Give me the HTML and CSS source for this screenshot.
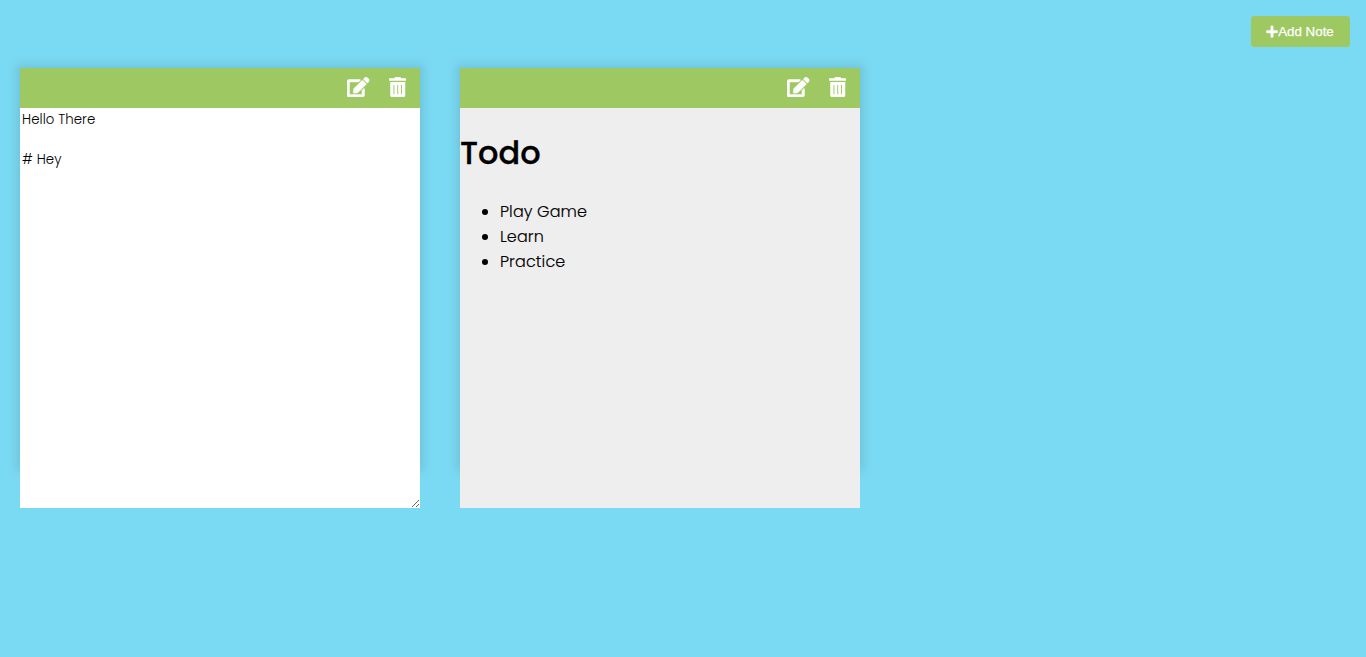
FILE: index.html
```html
<!DOCTYPE html>
<html lang="en">
<head>
<meta charset="utf-8">
<title>Notes</title>
<link rel="stylesheet" href="styles.css">
</head>
<body>
<svg class="sprite" aria-hidden="true">
  <symbol id="edit" viewBox="0 0 576 512"><path d="M402.6 83.2l90.2 90.2c3.8 3.8 3.8 10 0 13.8L274.4 405.6l-92.8 10.3c-12.4 1.4-22.9-9.1-21.5-21.5l10.3-92.8L388.8 83.2c3.8-3.8 10-3.8 13.8 0zm162-22.9l-48.8-48.8c-15.2-15.2-39.9-15.2-55.2 0l-35.4 35.4c-3.8 3.8-3.8 10 0 13.8l90.2 90.2c3.8 3.8 10 3.8 13.8 0l35.4-35.4c15.2-15.3 15.2-40 0-55.2zM384 346.2V448H64V128h229.8c3.2 0 6.2-1.3 8.5-3.5l40-40c7.6-7.6 2.2-20.5-8.5-20.5H48C21.5 64 0 85.5 0 112v352c0 26.5 21.5 48 48 48h352c26.5 0 48-21.5 48-48V306.2c0-10.7-12.9-16-20.5-8.5l-40 40c-2.2 2.3-3.5 5.3-3.5 8.5z"/></symbol>
  <symbol id="trash" viewBox="0 0 448 512"><path d="M32 464a48 48 0 0 0 48 48h288a48 48 0 0 0 48-48V128H32zm277-256a11 11 0 0 1 24 0v224a11 11 0 0 1-24 0zm-97 0a11 11 0 0 1 24 0v224a11 11 0 0 1-24 0zm-97 0a11 11 0 0 1 24 0v224a11 11 0 0 1-24 0zM432 32H312l-9.4-18.7A24 24 0 0 0 281.1 0H166.8a23.7 23.7 0 0 0-21.4 13.3L136 32H16A16 16 0 0 0 0 48v32a16 16 0 0 0 16 16h416a16 16 0 0 0 16-16V48a16 16 0 0 0-16-16z"/></symbol>
  <symbol id="plus" viewBox="0 0 448 512"><path d="M416 208H272V64c0-17.7-14.3-32-32-32h-32c-17.7 0-32 14.3-32 32v144H32c-17.7 0-32 14.3-32 32v32c0 17.7 14.3 32 32 32h144v144c0 17.7 14.3 32 32 32h32c17.7 0 32-14.3 32-32V304h144c17.7 0 32-14.3 32-32v-32c0-17.7-14.3-32-32-32z"/></symbol>
</svg>
<header class="toolbar">
  <button class="add"><svg class="plus"><use href="#plus"/></svg><span class="add-label">Add Note</span></button>
</header>
<main class="notes">
  <section class="note">
    <div class="tools">
      <button class="edit"><svg><use href="#edit"/></svg></button>
      <button class="delete"><svg><use href="#trash"/></svg></button>
    </div>
    <textarea class="editor" spellcheck="false">Hello There

# Hey</textarea>
  </section>
  <section class="note">
    <div class="tools">
      <button class="edit"><svg><use href="#edit"/></svg></button>
      <button class="delete"><svg><use href="#trash"/></svg></button>
    </div>
    <div class="preview">
      <h1>Todo</h1>
      <ul>
        <li>Play Game</li>
        <li>Learn</li>
        <li>Practice</li>
      </ul>
    </div>
  </section>
</main>
</body>
</html>
```
FILE: styles.css
```css
* { box-sizing: border-box; }
body {
  margin: 0;
  min-height: 100vh;
  background: #7bdaf3;
  font-family: Poppins, "Open Sans", sans-serif;
  font-weight: 300;
}
.sprite { display: none; }
.toolbar {
  display: flex;
  justify-content: flex-end;
  height: 48px;
  padding: 16px 16px 0;
}
.add {
  display: flex;
  align-items: center;
  justify-content: center;
  width: 99px;
  height: 31px;
  padding: 0 1px 0 0;
  border: 0;
  border-radius: 3px;
  background: #9ec862;
  color: #fff;
  font: 13.333px "Liberation Sans", sans-serif;
  -webkit-text-stroke: 0.25px #fff;
}
.plus { width: 12px; height: 13.3px; fill: currentColor; stroke: #fff; stroke-width: 16; }
.notes { display: flex; gap: 40px; padding: 20px 20px 0; }
.note {
  width: 400px;
  height: 400px;
  box-shadow: 0 0 10px 4px rgba(0, 0, 0, 0.1);
}
.tools {
  display: flex;
  justify-content: flex-end;
  align-items: center;
  height: 40px;
  padding: 0 14px 2px 0;
  gap: 19px;
  background: #9ec862;
}
.tools button { display: flex; padding: 0; border: 0; background: none; color: #fff; }
.tools svg { height: 20px; fill: currentColor; }
.edit svg { width: 22.5px; stroke: #fff; stroke-width: 12; }
.delete svg { width: 17.5px; }
.editor {
  display: block;
  width: 400px;
  height: 400px;
  padding: 2px;
  border: 0;
  outline: 0;
  background: #fff;
  color: #000;
  font-family: Poppins, "Open Sans", sans-serif;
  font-size: 13.333px;
  font-weight: 300;
  line-height: 20px;
  letter-spacing: 0.09px;
}
.preview { height: 400px; overflow: hidden; background: #eee; }
.preview h1 {
  margin: 21px 0 22px;
  font-size: 32px;
  line-height: 48px;
  font-weight: 500;
  -webkit-text-stroke: 0.3px #000;
}
.preview ul {
  margin: 0;
  padding-left: 40px;
  font-size: 16px;
  line-height: 25px;
  letter-spacing: 0.1px;
  -webkit-text-stroke: 0.15px #000;
}
```
